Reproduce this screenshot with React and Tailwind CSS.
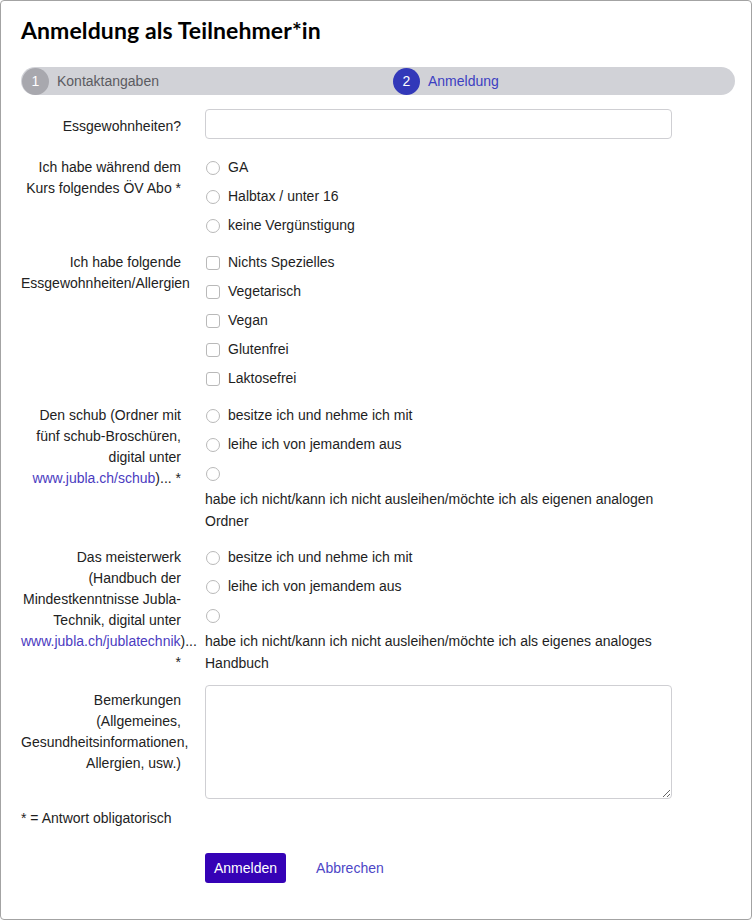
const body = { fontFamily: '"Liberation Sans", Arial, sans-serif' };

function Radio() {
  return <span className="block w-[14px] h-[14px] shrink-0 rounded-full border border-[#b9b9b9] bg-white" />;
}

function Check() {
  return <span className="block w-[14px] h-[14px] shrink-0 rounded-[3px] border border-[#b9b9b9] bg-white" />;
}

function Option({ kind, children }) {
  return (
    <div className="h-[29px] flex items-center">
      <span className="ml-px">{kind === 'check' ? <Check /> : <Radio />}</span>
      <span className="ml-[8px]">{children}</span>
    </div>
  );
}

function Row({ label, children, className = '' }) {
  return (
    <div className={`flex ${className}`}>
      <div className="w-[160px] shrink-0 text-right pt-[4px] leading-[21px] text-[#222]">{label}</div>
      <div className="ml-[24px] w-[467px]">{children}</div>
    </div>
  );
}

const link = 'text-[#4b3bbf]';

export default function App() {
  return (
    <div className="w-[755px] h-[921px] bg-white text-[14px] text-[#1e1e1e]" style={body}>
      <div className="w-[752px] h-[920px] border border-[#a3a3a3] rounded-[4px] px-[20px] pt-[15px]">
        <h1 className="text-[23px] leading-[28px] font-bold text-black tracking-[0.1px]" style={{ fontFamily: 'Lato, "DejaVu Sans", sans-serif' }}>
          Anmeldung als Teilnehmer*in
        </h1>

        <div className="mt-[23px] h-[28px] w-[714px] rounded-full bg-[#d1d2d7] flex items-center">
          <div className="w-[372px] flex items-center pl-px">
            <span className="w-[27px] h-[27px] rounded-full bg-[#a8a8ae] text-white flex items-center justify-center">1</span>
            <span className="ml-[8px] text-[#5b5b61]">Kontaktangaben</span>
          </div>
          <div className="flex items-center">
            <span className="w-[27px] h-[27px] rounded-full bg-[#3238b9] text-white flex items-center justify-center">2</span>
            <span className="ml-[8px] text-[#3c40c2]">Anmeldung</span>
          </div>
        </div>

        <div className="mt-[14px] flex">
          <div className="w-[160px] shrink-0 text-right pt-[7px] leading-[21px] text-[#222]">Essgewohnheiten?</div>
          <div className="ml-[24px] w-[467px] h-[30px] rounded-[4px] border border-[#cfcfd3] bg-white" />
        </div>

        <Row className="mt-[14px]" label={<>Ich habe während dem Kurs folgendes ÖV Abo *</>}>
          <Option>GA</Option>
          <Option>Halbtax / unter 16</Option>
          <Option>keine Vergünstigung</Option>
        </Row>

        <Row className="mt-[8px]" label={<>Ich habe folgende Essgewohnheiten/Allergien</>}>
          <Option kind="check">Nichts Spezielles</Option>
          <Option kind="check">Vegetarisch</Option>
          <Option kind="check">Vegan</Option>
          <Option kind="check">Glutenfrei</Option>
          <Option kind="check">Laktosefrei</Option>
        </Row>

        <Row
          className="mt-[8px]"
          label={
            <>
              Den schub (Ordner mit fünf schub-Broschüren, digital unter{' '}
              <span className={link}>www.jubla.ch/schub</span>)... *
            </>
          }
        >
          <Option>besitze ich und nehme ich mit</Option>
          <Option>leihe ich von jemandem aus</Option>
          <Option />
          <p className="leading-[22px]">habe ich nicht/kann ich nicht ausleihen/möchte ich als eigenen analogen Ordner</p>
        </Row>

        <Row
          className="mt-[11px]"
          label={
            <>
              Das meisterwerk (Handbuch der Mindestkenntnisse Jubla-Technik, digital unter{' '}
              <span className={link}>www.jubla.ch/jublatechnik</span>)... *
            </>
          }
        >
          <Option>besitze ich und nehme ich mit</Option>
          <Option>leihe ich von jemandem aus</Option>
          <Option />
          <p className="leading-[22px]">habe ich nicht/kann ich nicht ausleihen/möchte ich als eigenes analoges Handbuch</p>
        </Row>

        <div className="mt-[11px] flex">
          <div className="w-[160px] shrink-0 text-right pt-[5px] leading-[21px] text-[#222]">
            Bemerkungen (Allgemeines, Gesundheitsinformationen, Allergien, usw.)
          </div>
          <textarea
            className="ml-[24px] w-[467px] h-[114px] rounded-[4px] border border-[#cfcfd3] bg-white resize-y outline-none"
            defaultValue=""
          />
        </div>

        <p className="mt-[9px] leading-[21px]">* = Antwort obligatorisch</p>

        <div className="mt-[24px] ml-[184px] flex items-center">
          <button className="h-[30px] px-[9px] rounded-[3px] bg-[#3502b6] text-white">Anmelden</button>
          <a className="ml-[30px] text-[#4d46c6]">Abbrechen</a>
        </div>
      </div>
    </div>
  );
}
